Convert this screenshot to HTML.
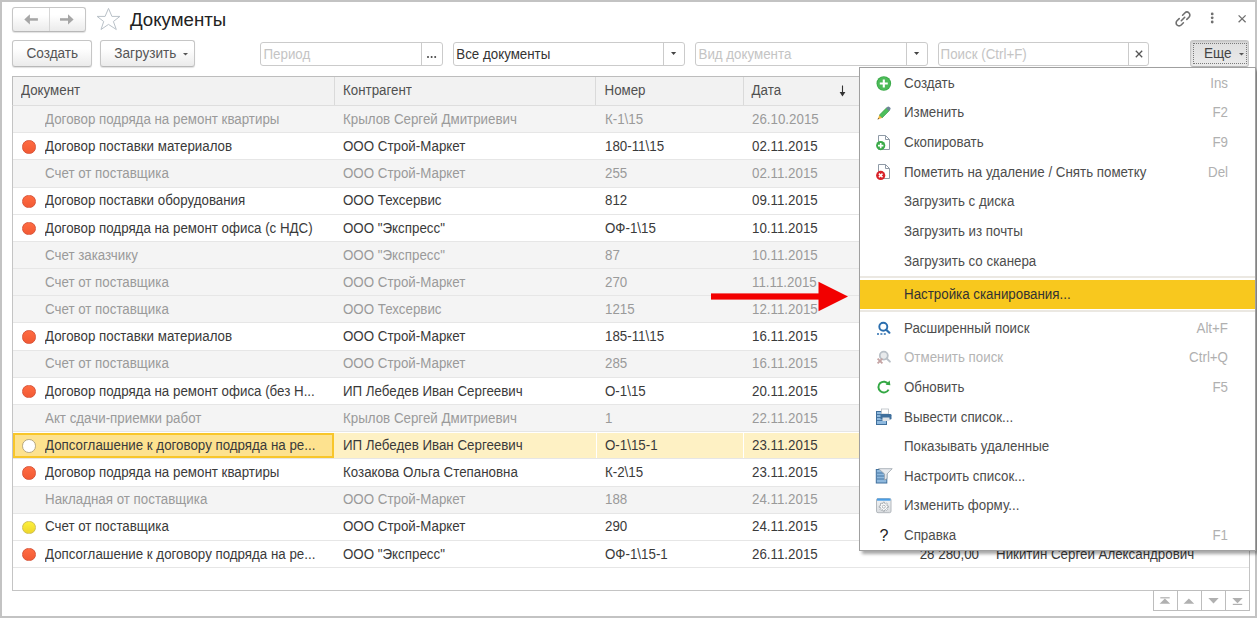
<!DOCTYPE html>
<html><head><meta charset="utf-8">
<style>
*{box-sizing:border-box;margin:0;padding:0}
html,body{width:1257px;height:618px;overflow:hidden;background:#fff}
body{position:relative;font-family:"Liberation Sans",sans-serif;font-size:13.33px;color:#333}
.a{position:absolute}
svg{position:absolute;overflow:visible}
.win{left:0;top:0;width:1257px;height:618px;border:2px solid #c3c3c3}
.btn{position:absolute;border:1px solid #c6c6c6;border-bottom-color:#b8b8b8;border-radius:3px;background:linear-gradient(#fff 30%,#ebebeb);box-shadow:0 1px 1px rgba(0,0,0,.12);color:#555;white-space:nowrap;font-size:13.6px}
.inp{position:absolute;border:1px solid #cbcbcb;border-radius:3px;background:#fff;white-space:nowrap;color:#333}
.ph{color:#c4c4c4;margin-top:-0.6px}
.t{position:absolute;white-space:nowrap;line-height:16px;transform:scaleY(1.1);transform-origin:0 12.6px}
.hdr{left:12px;top:76px;width:1238px;height:30px;background:#f2f2f2;border:1px solid #bdbdbd;border-bottom:1px solid #dedede}
.vs{position:absolute;top:77px;width:1px;height:28px;background:#dadada}
.row{position:absolute;left:13px;width:1236px;height:27.18px;border-bottom:1px solid #e6e6e6}
.row .c{position:absolute;top:5.8px;white-space:nowrap;line-height:16px;transform:scaleY(1.1);transform-origin:0 12.6px}
.g{background:#f4f4f4;color:#9a9a9a}
.w{background:#fff;color:#3a3a3a}
.s{background:#fff;color:#3a3a3a}
.selc{position:absolute;left:0;top:0.9px;width:321px;height:24.8px;background:#fde28f;border:2px solid #f8c62a}
.sbg{position:absolute;left:321px;top:0.9px;width:914px;height:24.8px;background:#fef1c4}
.dot{position:absolute;left:9.2px;top:7px;width:13.6px;height:13.6px;border-radius:50%}
.dr{background:linear-gradient(#ff6b42,#f25a34);border:1px solid #d8553a}
.dy{background:linear-gradient(#fdf03c,#eed62c);border:1px solid #cfc052}
.do{background:#fff;border:1.3px solid #b5a67e}
.menu{left:859px;top:67px;width:397px;height:484px;background:#fff;border:1px solid #a0a0a0;box-shadow:3px 3px 3px rgba(0,0,0,.35)}
.mi{position:absolute;left:904px;white-space:nowrap;line-height:16px;color:#4d4d4d;transform:scaleY(1.1);transform-origin:0 12.6px}
.sc{position:absolute;right:29px;white-space:nowrap;line-height:16px;color:#b0b0b0;transform:scaleY(1.1);transform-origin:0 12.6px}
.ic{position:absolute;left:876px;width:16px;height:16px}
</style></head><body>
<div class="a win"></div>

<!-- nav -->
<div class="btn" style="left:12px;top:7px;width:74px;height:25px"></div>
<div class="a" style="left:49px;top:8px;width:1px;height:23px;background:#d6d6d6"></div>
<svg width="20" height="20" style="left:20px;top:9px">
 <path d="M4.3 10.4 L9.9 5.3 L9.9 15.5 Z" fill="#a6a6a6"/><rect x="9" y="9.2" width="8.9" height="2.5" fill="#a6a6a6"/>
</svg>
<svg width="20" height="20" style="left:56px;top:9px">
 <path d="M17.6 10.4 L12 5.3 L12 15.5 Z" fill="#a6a6a6"/><rect x="4" y="9.2" width="8.9" height="2.5" fill="#a6a6a6"/>
</svg>
<svg width="30" height="30" style="left:92px;top:4px">
 <path d="M16.5 4.4 L19.9 12.4 L27.9 12.4 L21.4 17.5 L24.3 25.5 L16.5 20.4 L9 25.5 L11.7 17.5 L5.1 12.4 L13.1 12.4 Z" fill="none" stroke="#b9c1c8" stroke-width="1" stroke-linejoin="miter"/>
</svg>

<div class="t" style="left:130px;top:8.5px;font-size:18.67px;line-height:22px;color:#222;transform:none">Документы</div>

<!-- top right icons -->
<svg width="20" height="20" style="left:1173.5px;top:8px">
 <path d="M8.6 7.2 L10.8 5 A2.9 2.9 0 0 1 15 9.2 L12.8 11.4" fill="none" stroke="#707070" stroke-width="1.6" stroke-linecap="round"/>
 <path d="M9.4 14.8 L7.2 17 A2.9 2.9 0 0 1 3 12.8 L5.2 10.6" fill="none" stroke="#707070" stroke-width="1.6" stroke-linecap="round"/>
 <path d="M7.3 12.7 L10.7 9.3" stroke="#707070" stroke-width="1.6" stroke-linecap="round"/>
</svg>
<svg width="6" height="14" style="left:1209px;top:11px">
 <circle cx="3.2" cy="2.9" r="1.4" fill="#707070"/><circle cx="3.2" cy="6.8" r="1.4" fill="#707070"/><circle cx="3.2" cy="11" r="1.4" fill="#707070"/>
</svg>
<svg width="10" height="10" style="left:1237px;top:13.5px">
 <path d="M1.6 1.4 L8.6 8.2 M8.6 1.4 L1.6 8.2" stroke="#707070" stroke-width="1.3"/>
</svg>

<!-- toolbar -->
<div class="btn" style="left:12px;top:40px;width:80px;height:27px"><span class="t" style="left:13.5px;top:5.1px">Создать</span></div>
<div class="btn" style="left:100px;top:40px;width:95px;height:27px"><span class="t" style="left:13.3px;top:5.1px">Загрузить</span>
 <svg width="6" height="4" style="left:81.5px;top:12px"><path d="M0 0 L5 0 L2.5 2.6 Z" fill="#555"/></svg></div>

<div class="inp" style="left:260px;top:42px;width:183px;height:24px"><span class="t ph" style="left:2.5px;top:4.4px">Период</span>
 <div class="a" style="left:159.6px;top:0;width:1px;height:22px;background:#cbcbcb"></div>
 <svg width="12" height="4" style="left:165.8px;top:13px"><circle cx="1" cy="1" r="1" fill="#444"/><circle cx="4.6" cy="1" r="1" fill="#444"/><circle cx="8.2" cy="1" r="1" fill="#444"/></svg>
</div>
<div class="inp" style="left:453px;top:42px;width:232px;height:24px"><span class="t" style="left:2.3px;top:4.1px">Все документы</span>
 <div class="a" style="left:208.9px;top:0;width:1px;height:22px;background:#cbcbcb"></div>
 <svg width="6" height="4" style="left:217.2px;top:9px"><path d="M0 0 L5.2 0 L2.6 3 Z" fill="#444"/></svg>
</div>
<div class="inp" style="left:695px;top:42px;width:233px;height:24px"><span class="t ph" style="left:2.5px;top:4.4px">Вид документа</span>
 <div class="a" style="left:209.5px;top:0;width:1px;height:22px;background:#cbcbcb"></div>
 <svg width="6" height="4" style="left:218px;top:9px"><path d="M0 0 L5.2 0 L2.6 3 Z" fill="#444"/></svg>
</div>
<div class="inp" style="left:938px;top:42px;width:211px;height:24px"><span class="t ph" style="left:1.6px;top:4.4px">Поиск (Ctrl+F)</span>
 <div class="a" style="left:189px;top:0;width:1px;height:22px;background:#cbcbcb"></div>
 <svg width="10" height="10" style="left:195.5px;top:6.5px"><path d="M0.8 0.8 L7.2 7.2 M7.2 0.8 L0.8 7.2" stroke="#555" stroke-width="1.3"/></svg>
</div>

<div class="btn" style="left:1190px;top:40px;width:59px;height:27px;background:linear-gradient(#dedede,#ebebeb);box-shadow:inset 0 1px 2px rgba(0,0,0,.12)">
 <div class="a" style="left:2px;top:2px;width:54px;height:20.5px;border:1px dotted #7a7a7a"></div>
 <span class="t" style="left:13px;top:5px;color:#444">Еще</span>
 <svg width="6" height="4" style="left:47.5px;top:12px"><path d="M0 0 L5 0 L2.5 2.6 Z" fill="#555"/></svg>
</div>

<!-- table -->
<div class="a" style="left:12px;top:76px;width:1238px;height:515px;border:1px solid #c4c4c4"></div>
<div class="a hdr"></div>
<div class="vs" style="left:334px"></div>
<div class="vs" style="left:595px"></div>
<div class="vs" style="left:743px"></div>
<div class="t" style="left:21px;top:82.6px;color:#505050">Документ</div>
<div class="t" style="left:343px;top:82.6px;color:#505050">Контрагент</div>
<div class="t" style="left:604.5px;top:82.6px;color:#505050">Номер</div>
<div class="t" style="left:751.6px;top:82.6px;color:#505050">Дата</div>
<svg width="10" height="14" style="left:838px;top:84px"><path d="M4.5 1.5 L4.5 9" stroke="#333" stroke-width="1.1"/><path d="M1.6 8 L7.4 8 L4.5 12.5 Z" fill="#333"/></svg>

<div class="row g" style="top:106.00px">
<span class="c" style="left:32px">Договор подряда на ремонт квартиры</span>
<span class="c" style="left:330px">Крылов Сергей Дмитриевич</span>
<span class="c" style="left:592px">К-1\15</span>
<span class="c" style="left:739px">26.10.2015</span>
</div>
<div class="row w" style="top:133.18px">
<div class="dot dr"></div>
<span class="c" style="left:32px">Договор поставки материалов</span>
<span class="c" style="left:330px">ООО Строй-Маркет</span>
<span class="c" style="left:592px">180-11\15</span>
<span class="c" style="left:739px">02.11.2015</span>
</div>
<div class="row g" style="top:160.36px">
<span class="c" style="left:32px">Счет от поставщика</span>
<span class="c" style="left:330px">ООО Строй-Маркет</span>
<span class="c" style="left:592px">255</span>
<span class="c" style="left:739px">02.11.2015</span>
</div>
<div class="row w" style="top:187.54px">
<div class="dot dr"></div>
<span class="c" style="left:32px">Договор поставки оборудования</span>
<span class="c" style="left:330px">ООО Техсервис</span>
<span class="c" style="left:592px">812</span>
<span class="c" style="left:739px">09.11.2015</span>
</div>
<div class="row w" style="top:214.72px">
<div class="dot dr"></div>
<span class="c" style="left:32px">Договор подряда на ремонт офиса (с НДС)</span>
<span class="c" style="left:330px">ООО &quot;Экспресс&quot;</span>
<span class="c" style="left:592px">ОФ-1\15</span>
<span class="c" style="left:739px">10.11.2015</span>
</div>
<div class="row g" style="top:241.90px">
<span class="c" style="left:32px">Счет заказчику</span>
<span class="c" style="left:330px">ООО &quot;Экспресс&quot;</span>
<span class="c" style="left:592px">87</span>
<span class="c" style="left:739px">10.11.2015</span>
</div>
<div class="row g" style="top:269.08px">
<span class="c" style="left:32px">Счет от поставщика</span>
<span class="c" style="left:330px">ООО Строй-Маркет</span>
<span class="c" style="left:592px">270</span>
<span class="c" style="left:739px">11.11.2015</span>
</div>
<div class="row g" style="top:296.26px">
<span class="c" style="left:32px">Счет от поставщика</span>
<span class="c" style="left:330px">ООО Техсервис</span>
<span class="c" style="left:592px">1215</span>
<span class="c" style="left:739px">12.11.2015</span>
</div>
<div class="row w" style="top:323.44px">
<div class="dot dr"></div>
<span class="c" style="left:32px">Договор поставки материалов</span>
<span class="c" style="left:330px">ООО Строй-Маркет</span>
<span class="c" style="left:592px">185-11\15</span>
<span class="c" style="left:739px">16.11.2015</span>
</div>
<div class="row g" style="top:350.62px">
<span class="c" style="left:32px">Счет от поставщика</span>
<span class="c" style="left:330px">ООО Строй-Маркет</span>
<span class="c" style="left:592px">285</span>
<span class="c" style="left:739px">16.11.2015</span>
</div>
<div class="row w" style="top:377.80px">
<div class="dot dr"></div>
<span class="c" style="left:32px">Договор подряда на ремонт офиса (без Н...</span>
<span class="c" style="left:330px">ИП Лебедев Иван Сергеевич</span>
<span class="c" style="left:592px">О-1\15</span>
<span class="c" style="left:739px">20.11.2015</span>
</div>
<div class="row g" style="top:404.98px">
<span class="c" style="left:32px">Акт сдачи-приемки работ</span>
<span class="c" style="left:330px">Крылов Сергей Дмитриевич</span>
<span class="c" style="left:592px">1</span>
<span class="c" style="left:739px">22.11.2015</span>
</div>
<div class="row s" style="top:432.16px">
<div class="selc"></div><div class="sbg"></div><div class="a" style="left:583px;top:0.9px;width:1px;height:24.8px;background:#fff"></div><div class="a" style="left:730px;top:0.9px;width:1px;height:24.8px;background:#fff"></div>
<div class="dot do"></div>
<span class="c" style="left:32px">Допсоглашение к договору подряда на ре...</span>
<span class="c" style="left:330px">ИП Лебедев Иван Сергеевич</span>
<span class="c" style="left:592px">О-1\15-1</span>
<span class="c" style="left:739px">23.11.2015</span>
</div>
<div class="row w" style="top:459.34px">
<div class="dot dr"></div>
<span class="c" style="left:32px">Договор подряда на ремонт квартиры</span>
<span class="c" style="left:330px">Козакова Ольга Степановна</span>
<span class="c" style="left:592px">К-2\15</span>
<span class="c" style="left:739px">23.11.2015</span>
</div>
<div class="row g" style="top:486.52px">
<span class="c" style="left:32px">Накладная от поставщика</span>
<span class="c" style="left:330px">ООО Строй-Маркет</span>
<span class="c" style="left:592px">188</span>
<span class="c" style="left:739px">24.11.2015</span>
</div>
<div class="row w" style="top:513.70px">
<div class="dot dy"></div>
<span class="c" style="left:32px">Счет от поставщика</span>
<span class="c" style="left:330px">ООО Строй-Маркет</span>
<span class="c" style="left:592px">290</span>
<span class="c" style="left:739px">24.11.2015</span>
</div>
<div class="row w" style="top:540.88px">
<div class="dot dr"></div>
<span class="c" style="left:32px">Допсоглашение к договору подряда на ре...</span>
<span class="c" style="left:330px">ООО &quot;Экспресс&quot;</span>
<span class="c" style="left:592px">ОФ-1\15-1</span>
<span class="c" style="left:739px">26.11.2015</span>
<span class="c" style="right:270px">28 280,00</span>
<span class="c" style="left:983px">Никитин Сергей Александрович</span>
</div>

<!-- bottom nav -->
<div class="a" style="left:1153px;top:590px;width:97px;height:21px;border:1px solid #bdbdbd;background:#fff"></div>
<div class="a" style="left:1177px;top:590px;width:1px;height:20px;background:#bdbdbd"></div>
<div class="a" style="left:1201px;top:590px;width:1px;height:20px;background:#bdbdbd"></div>
<div class="a" style="left:1225px;top:590px;width:1px;height:20px;background:#bdbdbd"></div>
<svg width="96" height="20" style="left:1153px;top:590px">
 <rect x="7.3" y="7.2" width="9.4" height="1.2" fill="#b0b0b0"/><path d="M6.6 13.8 L11.9 8.6 L17.2 13.8 Z" fill="#b0b0b0"/>
 <path d="M30.6 13.8 L35.9 8.6 L41.2 13.8 Z" fill="#b0b0b0"/>
 <path d="M55.3 8 L60.5 13.4 L65.7 8 Z" fill="#b0b0b0"/>
 <path d="M79.3 8 L84.5 13.2 L89.7 8 Z" fill="#b0b0b0"/><rect x="79.8" y="13.8" width="9.4" height="1.2" fill="#b0b0b0"/>
</svg>

<!-- menu -->
<div class="a menu"></div>
<span class="mi" style="top:75.7px;">Создать</span>
<span class="sc" style="top:75.7px">Ins</span>
<svg width="16" height="16" style="left:876px;top:75.50px"><circle cx="7.8" cy="7.5" r="7.3" fill="#3aaa48"/><circle cx="7.8" cy="7.5" r="6.4" fill="#4cbb58"/><path d="M7.8 3.5 V11.5 M3.8 7.5 H11.8" stroke="#fff" stroke-width="2.1"/></svg>
<span class="mi" style="top:105.3px;">Изменить</span>
<span class="sc" style="top:105.3px">F2</span>
<svg width="16" height="16" style="left:876px;top:105.13px"><path d="M3.2 10.2 L10.6 2.8 L13.4 5.6 L6 13 Z" fill="#4cbf5a" stroke="#2f8a3c" stroke-width=".6"/><path d="M10.2 3.2 L11.6 1.8 Q12.5 1 13.4 1.9 L14.3 2.8 Q15.1 3.7 14.3 4.6 L12.9 6 Z" fill="#6d8399"/><path d="M3.2 10.2 L6 13 L1.6 14.6 Z" fill="#f6b73c"/><path d="M2.2 12.9 L3.1 13.8 L1.6 14.6 Z" fill="#3a3a3a"/></svg>
<span class="mi" style="top:135.0px;">Скопировать</span>
<span class="sc" style="top:135.0px">F9</span>
<svg width="16" height="16" style="left:876px;top:134.76px"><path d="M2.5 .5 H9.5 L13.5 4.5 V14.5 H2.5 Z" fill="#fff" stroke="#8f9aa6" stroke-width="1"/><path d="M9.5 .5 V4.5 H13.5" fill="none" stroke="#8f9aa6" stroke-width="1"/><circle cx="4.7" cy="10.6" r="4.6" fill="#3aaa48"/><path d="M4.7 7.9 V13.3 M2 10.6 H7.4" stroke="#fff" stroke-width="1.6"/></svg>
<span class="mi" style="top:164.6px;">Пометить на удаление / Снять пометку</span>
<span class="sc" style="top:164.6px">Del</span>
<svg width="16" height="16" style="left:876px;top:164.39px"><path d="M2.5 .5 H9.5 L13.5 4.5 V14.5 H2.5 Z" fill="#fff" stroke="#8f9aa6" stroke-width="1"/><path d="M9.5 .5 V4.5 H13.5" fill="none" stroke="#8f9aa6" stroke-width="1"/><circle cx="4.7" cy="11.4" r="4.6" fill="#d8232a"/><path d="M2.9 9.6 L6.5 13.2 M6.5 9.6 L2.9 13.2" stroke="#fff" stroke-width="1.5"/></svg>
<span class="mi" style="top:194.2px;">Загрузить с диска</span>
<span class="mi" style="top:223.8px;">Загрузить из почты</span>
<span class="mi" style="top:253.5px;">Загрузить со сканера</span>
<div class="a" style="left:860px;top:276px;width:395px;height:2px;background:#ebe8e2"></div>
<div class="a" style="left:860px;top:280px;width:395px;height:29px;background:#f8c81e"></div>
<span class="mi" style="top:287px;color:#333">Настройка сканирования...</span>
<div class="a" style="left:860px;top:310px;width:395px;height:1.5px;background:#ebe8e2"></div>
<span class="mi" style="top:320.8px;">Расширенный поиск</span>
<span class="sc" style="top:320.8px">Alt+F</span>
<svg width="16" height="16" style="left:876px;top:320.60px"><circle cx="7.3" cy="5.8" r="4" fill="none" stroke="#2b6eae" stroke-width="1.9"/><path d="M10.2 8.7 L13.4 11.7" stroke="#2b6eae" stroke-width="2.2" stroke-linecap="round"/><path d="M1 13 H3 M4.4 13 H6.4 M7.8 13 H9.8" stroke="#2b6eae" stroke-width="1.5"/></svg>
<span class="mi" style="top:350.4px;color:#b4b4b4">Отменить поиск</span>
<span class="sc" style="top:350.4px">Ctrl+Q</span>
<svg width="16" height="16" style="left:876px;top:350.15px"><circle cx="7.8" cy="5.6" r="4" fill="#e8eaec" stroke="#b9c0c7" stroke-width="1.8"/><path d="M10.7 8.5 L13.9 11.6" stroke="#b9c0c7" stroke-width="2" stroke-linecap="round"/><path d="M1.6 8.6 L6.4 13.4 M6.4 8.6 L1.6 13.4" stroke="#c4a3a3" stroke-width="1.8"/></svg>
<span class="mi" style="top:379.9px;">Обновить</span>
<span class="sc" style="top:379.9px">F5</span>
<svg width="16" height="16" style="left:876px;top:379.70px"><path d="M12.4 4.2 A5.4 5.4 0 1 0 12.6 9.6" fill="none" stroke="#34a844" stroke-width="2"/><path d="M9.6 4.8 L14.4 5.2 L13.6 0.4 Z" fill="#34a844"/></svg>
<span class="mi" style="top:409.5px;">Вывести список...</span>
<svg width="18" height="16" style="left:876px;top:409.25px;margin-top:-1.5px"><rect x=".5" y="3.5" width="10" height="13" fill="#8fb9de" stroke="#3f6f9c" stroke-width="1"/><path d="M1 6.5 H10 M1 9.5 H10 M1 12.5 H10" stroke="#3f6f9c" stroke-width=".9"/><rect x="5.5" y="1" width="7" height="5" fill="#fff" stroke="#b8bec4" stroke-width=".8"/><rect x="4.5" y="6" width="11" height="5.5" rx="1.2" fill="#3f6f9c"/><rect x="6.5" y="9.5" width="7" height="3.5" fill="#dfe3e7"/></svg>
<span class="mi" style="top:439.0px;">Показывать удаленные</span>
<span class="mi" style="top:468.6px;">Настроить список...</span>
<svg width="18" height="16" style="left:876px;top:468.35px"><rect x=".3" y="1.5" width="10.5" height="13.5" fill="#8fb9de" stroke="#3f6f9c" stroke-width="1"/><path d="M1 5 H10 M1 8 H10 M1 11 H10" stroke="#3f6f9c" stroke-width=".9"/><path d="M2.6 .7 H16.2 L11 6 V10.6 L8.6 12 V6 Z" fill="#e9ecef" stroke="#9aa3ab" stroke-width=".8"/></svg>
<span class="mi" style="top:498.1px;">Изменить форму...</span>
<svg width="16" height="16" style="left:876px;top:497.90px"><defs><linearGradient id="fg" x1="0" y1="0" x2="0" y2="1"><stop offset="0" stop-color="#f2f3f4"/><stop offset="1" stop-color="#d9dcdf"/></linearGradient></defs><rect x=".5" y=".5" width="14.5" height="14.2" rx="1.5" fill="url(#fg)" stroke="#b3b8bd" stroke-width="1"/><rect x="1" y=".5" width="13.5" height="2.2" fill="#4a9ee6"/><path d="M12.34 7.97 L12.34 9.43 L11.11 9.48 L10.69 10.48 L11.53 11.39 L10.49 12.43 L9.58 11.59 L8.58 12.01 L8.53 13.24 L7.07 13.24 L7.02 12.01 L6.02 11.59 L5.11 12.43 L4.07 11.39 L4.91 10.48 L4.49 9.48 L3.26 9.43 L3.26 7.97 L4.49 7.92 L4.91 6.92 L4.07 6.01 L5.11 4.97 L6.02 5.81 L7.02 5.39 L7.07 4.16 L8.53 4.16 L8.58 5.39 L9.58 5.81 L10.49 4.97 L11.53 6.01 L10.69 6.92 L11.11 7.92 Z" fill="#fff" stroke="#9aa1a7" stroke-width=".8"/><circle cx="7.8" cy="8.7" r="1.5" fill="none" stroke="#9aa1a7" stroke-width=".8"/></svg>
<span class="mi" style="top:527.6px;">Справка</span>
<span class="sc" style="top:527.6px">F1</span>
<svg width="16" height="16" style="left:876px;top:527.45px"><text x="3.6" y="13.6" font-family="Liberation Sans" font-size="16" fill="#222">?</text></svg>

<!-- red arrow -->
<svg width="150" height="40" style="left:700px;top:275px">
 <rect x="11" y="18.4" width="109" height="6.2" fill="#f20000"/>
 <path d="M118.5 6.8 L148 21.5 L118.5 36.2 Z" fill="#f20000"/>
</svg>
</body></html>
